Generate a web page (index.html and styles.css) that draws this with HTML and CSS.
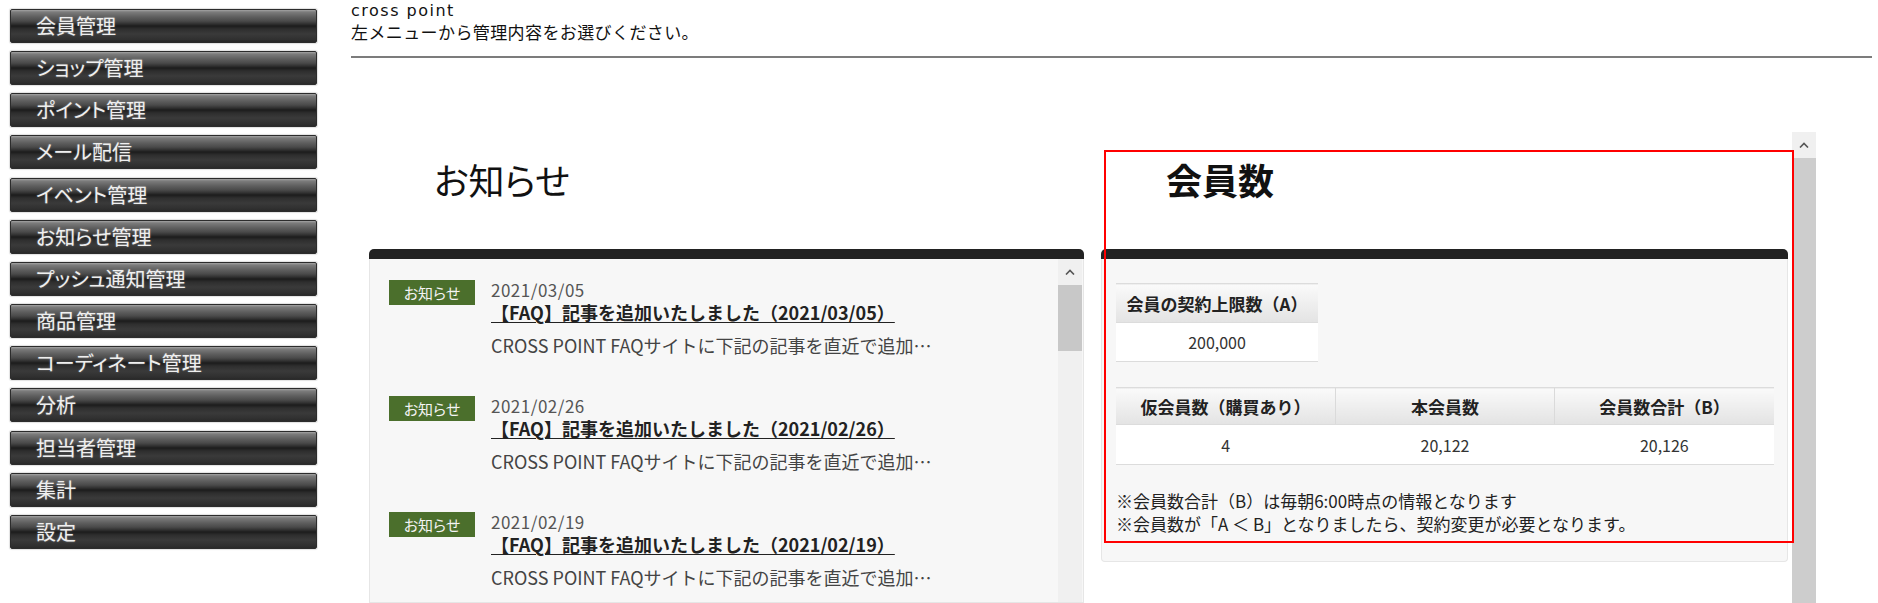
FILE: index.html
```html
<!DOCTYPE html>
<html lang="ja">
<head>
<meta charset="utf-8">
<title>cross point</title>
<link rel="stylesheet" href="styles.css">
</head>
<body>
<div class="app">
  <nav class="sidebar">
    <a class="menu-btn">会員管理</a>
    <a class="menu-btn">ショップ管理</a>
    <a class="menu-btn">ポイント管理</a>
    <a class="menu-btn">メール配信</a>
    <a class="menu-btn">イベント管理</a>
    <a class="menu-btn">お知らせ管理</a>
    <a class="menu-btn">プッシュ通知管理</a>
    <a class="menu-btn">商品管理</a>
    <a class="menu-btn">コーディネート管理</a>
    <a class="menu-btn">分析</a>
    <a class="menu-btn">担当者管理</a>
    <a class="menu-btn">集計</a>
    <a class="menu-btn">設定</a>
  </nav>
  <main class="main">
    <header class="top">
      <div class="brand">cross point</div>
      <div class="lead">左メニューから管理内容をお選びください。</div>
      <div class="rule"></div>
    </header>
    <div class="frame">
      <div class="frame-content">
        <section class="col col-news">
          <h2 class="col-title">お知らせ</h2>
          <div class="panel">
            <div class="panel-bar"></div>
            <div class="panel-body news-body">
              <ul class="news-list">
                <li class="news-item">
                  <span class="badge">お知らせ</span>
                  <div class="news-text">
                    <div class="news-date">2021/03/05</div>
                    <a class="news-title">【FAQ】記事を追加いたしました（2021/03/05）</a>
                    <div class="news-desc">CROSS POINT FAQサイトに下記の記事を直近で追加…</div>
                  </div>
                </li>
                <li class="news-item">
                  <span class="badge">お知らせ</span>
                  <div class="news-text">
                    <div class="news-date">2021/02/26</div>
                    <a class="news-title">【FAQ】記事を追加いたしました（2021/02/26）</a>
                    <div class="news-desc">CROSS POINT FAQサイトに下記の記事を直近で追加…</div>
                  </div>
                </li>
                <li class="news-item">
                  <span class="badge">お知らせ</span>
                  <div class="news-text">
                    <div class="news-date">2021/02/19</div>
                    <a class="news-title">【FAQ】記事を追加いたしました（2021/02/19）</a>
                    <div class="news-desc">CROSS POINT FAQサイトに下記の記事を直近で追加…</div>
                  </div>
                </li>
              </ul>
              <div class="news-scroll">
                <div class="sb-up"><svg width="10" height="6" viewBox="0 0 10 6"><polyline points="1,5.5 5,1.5 9,5.5" fill="none" stroke="#555" stroke-width="1.6"/></svg></div>
                <div class="sb-thumb"></div>
              </div>
            </div>
          </div>
        </section>
        <section class="col col-members">
          <h2 class="col-title col-title-strong">会員数</h2>
          <div class="panel">
            <div class="panel-bar"></div>
            <div class="panel-body members-body">
              <table class="stat-table limit-table">
                <tr><th>会員の契約上限数（A）</th></tr>
                <tr><td>200,000</td></tr>
              </table>
              <table class="stat-table sum-table">
                <tr><th>仮会員数（購買あり）</th><th>本会員数</th><th>会員数合計（B）</th></tr>
                <tr><td>4</td><td>20,122</td><td>20,126</td></tr>
              </table>
              <div class="notes">
                <p>※会員数合計（B）は毎朝6:00時点の情報となります</p>
                <p>※会員数が「A ＜ B」となりましたら、契約変更が必要となります。</p>
              </div>
            </div>
          </div>
          <div class="annot"></div>
        </section>
      </div>
      <div class="frame-scroll">
        <div class="sb-up"><svg width="10" height="6" viewBox="0 0 10 6"><polyline points="1,5.5 5,1.5 9,5.5" fill="none" stroke="#555" stroke-width="1.6"/></svg></div>
      </div>
    </div>
  </main>
</div>
</body>
</html>
```
FILE: styles.css
```css
* { box-sizing: border-box; }
html, body { margin: 0; padding: 0; background: #fff; }
body {
  font-family: "Noto Sans CJK JP", "Noto Sans", sans-serif;
  color: #222;
  width: 1878px;
  height: 603px;
  overflow: hidden;
}
.app { display: flex; align-items: flex-start; }

/* sidebar */
.sidebar {
  width: 317px;
  flex: none;
  padding: 9px 0 0 10px;
  display: flex;
  flex-direction: column;
  gap: 8.17px;
}
.menu-btn {
  display: flex;
  align-items: center;
  height: 34px;
  padding-left: 25px;
  border-radius: 2px;
  border: 1px solid #2c2c2c;
  background: linear-gradient(to bottom,
    #a4a4a4 0px, #7c7c7c 2px, #5e5e5e 7px, #4a4a4a 11px,
    #303030 14px, #1c1c1c 16px, #2e2e2e 19px, #3a3a3a 24px,
    #2f2f2f 30px, #232323 34px);
  box-shadow: 0 0 1px 1px rgba(0,0,0,0.12);
  color: #efefef;
  font-size: 20px;
  line-height: 1;
  font-feature-settings: "palt";
  text-shadow: 0 0 2px rgba(255,255,255,0.35);
  text-decoration: none;
}

/* main */
.main { flex: 1; padding-left: 34px; padding-right: 6px; }
.top { height: 132px; padding-top: 1px; }
.brand {
  font-family: "DejaVu Sans", sans-serif;
  font-size: 16px;
  letter-spacing: 1.5px;
  line-height: 19px;
  color: #111;
}
.lead { margin-top: 1px; font-size: 17px; line-height: 22px; letter-spacing: 0.4px; color: #111; }
.rule { margin-top: 13px; height: 2px; background: #7c7c7c; }

.frame { display: flex; width: 1465px; height: 471px; }
.frame-content {
  flex: 1;
  display: flex;
  align-items: flex-start;
  gap: 17px;
  padding-left: 18px;
  padding-right: 4px;
}
.col { position: relative; flex: none; }
.col-news { width: 715px; }
.col-members { width: 687px; }
.col-title {
  margin: 0;
  height: 117px;
  padding: 28.5px 0 0 65px;
  font-size: 36px;
  line-height: 36px;
  font-weight: normal;
  font-feature-settings: "palt";
  color: #111;
}
.col-title-strong { font-weight: bold; }

.panel-bar { height: 10px; background: #222; border-radius: 5px 5px 0 0; }
.panel-body { background: #f7f7f7; border: 1px solid #e6e6e6; border-top: none; }

/* news */
.news-body { height: 344px; display: flex; padding-right: 1px; overflow: hidden; }
.news-list {
  flex: 1;
  list-style: none;
  margin: 0;
  padding: 21px 0 0 19px;
  display: flex;
  flex-direction: column;
  gap: 39px;
}
.news-item { display: flex; align-items: flex-start; gap: 16px; }
.badge {
  flex: none;
  width: 86px;
  height: 25px;
  background: #4b6f2c;
  color: #f4f4f4;
  font-size: 15px;
  line-height: 25px;
  text-align: center;
  font-feature-settings: "palt";
}
.news-text { display: flex; flex-direction: column; align-items: flex-start; }
.news-date { font-size: 17px; line-height: 20px; letter-spacing: 0.5px; color: #555; }
.news-title {
  font-size: 18px;
  line-height: 24px;
  font-weight: bold;
  color: #222;
  text-decoration: underline;
  text-underline-offset: 2px;
}
.news-desc { margin-top: 9px; font-size: 18px; line-height: 24px; color: #444; }

.news-scroll { flex: none; width: 24px; background: #f0f0f0; display: flex; flex-direction: column; }
.sb-up { height: 26px; display: flex; align-items: center; justify-content: center; background: #f0f0f0; }
.sb-thumb { height: 66px; background: #c8c8c8; }

/* members */
.members-body { height: 303px; padding: 24px 14px 0 14px; border-radius: 0 0 4px 4px; }
.stat-table { border-collapse: collapse; }
.stat-table th {
  padding: 0;
  background: linear-gradient(to bottom, #fafafa, #e3e3e3);
  border-top: 1px solid #dcdcdc;
  border-bottom: 1px solid #dcdcdc;
  font-size: 17px;
  font-weight: bold;
  color: #222;
  text-align: center;
}
.stat-table th + th { border-left: 1px solid #dadada; }
.stat-table td {
  padding: 0;
  background: #fff;
  border-bottom: 1px solid #dcdcdc;
  font-size: 16px;
  color: #333;
  text-align: center;
}
.limit-table { width: 202px; }
.limit-table th { height: 39px; }
.limit-table td { height: 39px; }
.sum-table { width: 658px; margin-top: 25px; table-layout: fixed; }
.sum-table th { height: 37px; }
.sum-table td { height: 40px; }
.notes { margin-top: 24px; font-size: 17px; line-height: 23px; color: #222; }
.notes p { margin: 0; }

.annot {
  position: absolute;
  left: 3px;
  top: 18px;
  width: 690px;
  height: 393px;
  border: 2px solid #f00;
  pointer-events: none;
}

.frame-scroll { flex: none; width: 24px; background: #cdcdcd; }
```
